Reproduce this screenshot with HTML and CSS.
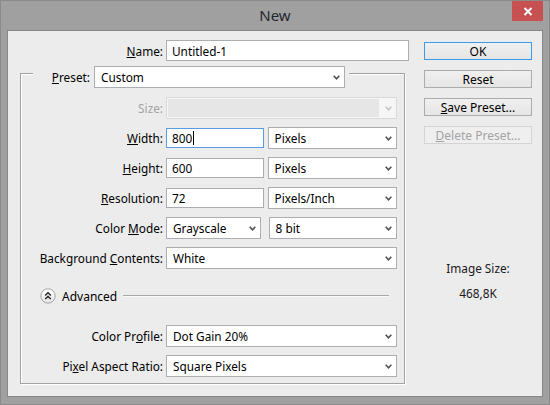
FILE: index.html
```html
<!DOCTYPE html>
<html>
<head>
<meta charset="utf-8">
<link rel="stylesheet" href="styles.css">
</head>
<body>
<div class="window">
  <div class="titlebar">
    <div></div>
    <div class="title">New</div>
    <div class="tb-right">
      <div class="close"><svg width="10" height="9" viewBox="0 0 10 9"><path d="M1.5 1 L8.5 8 M8.5 1 L1.5 8" stroke="#fff" stroke-width="2" fill="none"/></svg></div>
    </div>
  </div>
  <div class="client">
    <div class="main">
      <div class="name-row">
        <span class="lbl name-lbl"><u>N</u>ame:</span>
        <div class="field name-field">Untitled-1</div>
      </div>
      <div class="group">
        <div class="legend">
          <span class="lbl"><u>P</u>reset:</span>
          <div class="combo preset"><span>Custom</span><svg class="chev" width="7" height="5" viewBox="0 0 7 5"><path d="M0.7 0.8 L3.5 3.8 L6.3 0.8" stroke="#505050" stroke-width="1.6" fill="none"/></svg></div>
        </div>
        <div class="grid">
          <span class="lbl dim">Size:</span>
          <div class="combo combo-dis"><div class="dis-fill"></div><svg class="chev" width="7" height="5" viewBox="0 0 7 5"><path d="M0.7 0.8 L3.5 3.8 L6.3 0.8" stroke="#c4c4c4" stroke-width="1.6" fill="none"/></svg></div>

          <span class="lbl"><u>W</u>idth:</span>
          <div class="pair">
            <div class="field num focused">800<span class="caret"></span></div>
            <div class="combo unit"><span>Pixels</span><svg class="chev" width="7" height="5" viewBox="0 0 7 5"><path d="M0.7 0.8 L3.5 3.8 L6.3 0.8" stroke="#505050" stroke-width="1.6" fill="none"/></svg></div>
          </div>

          <span class="lbl"><u>H</u>eight:</span>
          <div class="pair">
            <div class="field num">600</div>
            <div class="combo unit"><span>Pixels</span><svg class="chev" width="7" height="5" viewBox="0 0 7 5"><path d="M0.7 0.8 L3.5 3.8 L6.3 0.8" stroke="#505050" stroke-width="1.6" fill="none"/></svg></div>
          </div>

          <span class="lbl"><u>R</u>esolution:</span>
          <div class="pair">
            <div class="field num">72</div>
            <div class="combo unit"><span>Pixels/Inch</span><svg class="chev" width="7" height="5" viewBox="0 0 7 5"><path d="M0.7 0.8 L3.5 3.8 L6.3 0.8" stroke="#505050" stroke-width="1.6" fill="none"/></svg></div>
          </div>

          <span class="lbl">Color <u>M</u>ode:</span>
          <div class="pair pair-mode">
            <div class="combo mode"><span>Grayscale</span><svg class="chev" width="7" height="5" viewBox="0 0 7 5"><path d="M0.7 0.8 L3.5 3.8 L6.3 0.8" stroke="#505050" stroke-width="1.6" fill="none"/></svg></div>
            <div class="combo depth"><span>8 bit</span><svg class="chev" width="7" height="5" viewBox="0 0 7 5"><path d="M0.7 0.8 L3.5 3.8 L6.3 0.8" stroke="#505050" stroke-width="1.6" fill="none"/></svg></div>
          </div>

          <span class="lbl">Background <u>C</u>ontents:</span>
          <div class="combo"><span>White</span><svg class="chev" width="7" height="5" viewBox="0 0 7 5"><path d="M0.7 0.8 L3.5 3.8 L6.3 0.8" stroke="#505050" stroke-width="1.6" fill="none"/></svg></div>
        </div>

        <div class="advanced">
          <svg class="adv-icon" width="16" height="16" viewBox="0 0 16 16">
            <defs><linearGradient id="g" x1="0" y1="0" x2="0" y2="1"><stop offset="0" stop-color="#ffffff"/><stop offset="1" stop-color="#e2e2e2"/></linearGradient></defs>
            <circle cx="8" cy="8" r="7.2" fill="url(#g)" stroke="#a8a8a8" stroke-width="1"/>
            <path d="M5.2 7.4 L8 4.8 L10.8 7.4 M5.2 11 L8 8.4 L10.8 11" stroke="#222" stroke-width="1.4" fill="none"/>
          </svg>
          <span class="adv-text">Advanced</span>
          <div class="adv-line"></div>
        </div>

        <div class="grid grid2">
          <span class="lbl">Color Pr<u>o</u>file:</span>
          <div class="combo"><span>Dot Gain 20%</span><svg class="chev" width="7" height="5" viewBox="0 0 7 5"><path d="M0.7 0.8 L3.5 3.8 L6.3 0.8" stroke="#505050" stroke-width="1.6" fill="none"/></svg></div>
          <span class="lbl">Pi<u>x</u>el Aspect Ratio:</span>
          <div class="combo"><span>Square Pixels</span><svg class="chev" width="7" height="5" viewBox="0 0 7 5"><path d="M0.7 0.8 L3.5 3.8 L6.3 0.8" stroke="#505050" stroke-width="1.6" fill="none"/></svg></div>
        </div>
      </div>
    </div>
    <div class="side">
      <div class="btn default">OK</div>
      <div class="btn">Reset</div>
      <div class="btn"><u>S</u>ave Preset...</div>
      <div class="btn disabled"><u>D</u>elete Preset...</div>
      <div class="info-label">Image Size:</div>
      <div class="info-value">468,8K</div>
    </div>
  </div>
</div>
</body>
</html>
```

FILE: styles.css
```css
* { box-sizing: border-box; }
html, body { margin: 0; padding: 0; }
body {
  width: 550px;
  height: 405px;
  font-family: "Noto Sans", "Open Sans", sans-serif;
  font-size: 11.8px;
  color: #000;
}
u { text-decoration: underline; text-underline-offset: 1px; }

.window {
  width: 550px;
  height: 405px;
  background: #a0a0a0;
  border: 1px solid #8a8a8a;
  display: flex;
  flex-direction: column;
}

.titlebar {
  height: 29px;
  display: grid;
  grid-template-columns: 1fr auto 1fr;
  align-items: start;
}
.title {
  font-size: 15px;
  color: #1f2630;
  line-height: 29px;
  padding-top: 0;
}
.tb-right {
  display: flex;
  justify-content: flex-end;
  padding-right: 6px;
}
.close {
  width: 31px;
  height: 20px;
  background: #c75050;
  display: flex;
  align-items: center;
  justify-content: center;
}

.client {
  margin: 0 6px;
  height: 367px;
  background: #ececec;
  border: 1px solid #878787;
  display: flex;
}

.main {
  width: 401px;
  padding-top: 9px;
}

.lbl {
  white-space: nowrap;
  line-height: 16px;
}
.dim { color: #a3a3a3; }

.name-row {
  display: flex;
  align-items: center;
  height: 21px;
  gap: 3px;
}
.name-lbl {
  width: 155px;
  text-align: right;
}

.field {
  height: 20px;
  background: #fff;
  border: 1px solid #abadb3;
  display: flex;
  align-items: center;
  padding-left: 5px;
  white-space: nowrap;
}
.name-field {
  width: 243px;
  height: 21px;
}
.num { width: 98px; }
.focused { border-color: #569de5; }
.caret {
  display: inline-block;
  width: 1px;
  height: 14px;
  background: #000;
  margin-left: 1px;
}

.combo {
  height: 22px;
  background: #fff;
  border: 1px solid #abadb3;
  display: flex;
  align-items: center;
  justify-content: space-between;
  padding: 0 4px 0 6px;
  white-space: nowrap;
}
.chev { flex: none; display: block; }

.group {
  margin-top: 12px;
  margin-left: 12px;
  width: 385px;
  border: 1px solid #a3a3a3;
  box-shadow: 1px 1px 0 #fff, inset 1px 1px 0 #fff;
  padding-bottom: 2px;
}

.legend {
  margin-top: -8px;
  margin-left: 12px;
  width: 316px;
  height: 22px;
  background: #ececec;
  display: flex;
  align-items: center;
  justify-content: flex-end;
  gap: 4px;
  padding-right: 4px;
}
.preset { width: 251px; }

.grid {
  margin-top: 5px;
  display: grid;
  grid-template-columns: 142px 231px;
  column-gap: 3px;
  grid-auto-rows: 30px;
  align-items: center;
}
.grid > .lbl { text-align: right; }
.grid2 { margin-top: 10px; }

.combo-dis {
  border-color: #d9d9d9;
  background: #f6f6f6;
  padding: 1px 4px 1px 1px;
  align-items: center;
}
.dis-fill {
  flex: 1;
  align-self: stretch;
  background: #e6e6e6;
  margin-right: 6px;
}

.pair {
  display: flex;
  align-items: center;
  gap: 4px;
}
.unit { width: 130px; }
.pair-mode { gap: 8px; }
.mode { width: 95px; }
.depth { width: 129px; }

.advanced {
  margin-top: 8px;
  height: 30px;
  display: flex;
  align-items: center;
  padding-left: 19px;
}
.adv-icon { display: block; flex: none; }
.adv-text {
  margin-left: 6px;
  font-size: 12px;
}
.adv-line {
  flex: 1;
  height: 2px;
  border-top: 1px solid #a8a8a8;
  border-bottom: 1px solid #fafafa;
  margin-left: 6px;
  margin-right: 15px;
}

.side {
  margin-left: 15px;
  width: 108px;
  padding-top: 11px;
  display: flex;
  flex-direction: column;
  gap: 10px;
}
.btn {
  height: 18px;
  border: 1px solid #acacac;
  background: linear-gradient(#f0f0f0, #e5e5e5);
  display: flex;
  align-items: center;
  justify-content: center;
  white-space: nowrap;
  font-size: 12px;
}
.btn.default { border-color: #3c9ae6; }
.btn.disabled {
  color: #a3a3a3;
  border-color: #d4d4d4;
  background: #efefef;
}
.info-label {
  margin-top: 106px;
  text-align: center;
  line-height: 16px;
  color: #1a1a1a;
}
.info-value {
  margin-top: -1px;
  text-align: center;
  line-height: 16px;
  color: #1a1a1a;
}
```
